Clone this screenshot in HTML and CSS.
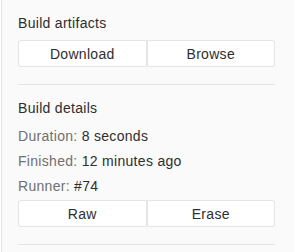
FILE: index.html
```html
<!DOCTYPE html>
<html>
<head>
<meta charset="utf-8">
<link rel="stylesheet" href="styles.css">
</head>
<body>
<aside class="sidebar">
  <section class="block">
    <div class="title">Build artifacts</div>
    <div class="btn-group">
      <a class="btn">Download</a>
      <a class="btn">Browse</a>
    </div>
  </section>
  <section class="block">
    <div class="title">Build details</div>
    <div class="rows">
      <p class="row"><span class="label">Duration:</span> 8 seconds</p>
      <p class="row"><span class="label">Finished:</span> 12 minutes ago</p>
      <p class="row"><span class="label">Runner:</span> #74</p>
    </div>
    <div class="btn-group">
      <a class="btn">Raw</a>
      <a class="btn">Erase</a>
    </div>
  </section>
</aside>
</body>
</html>
```
FILE: styles.css
```css
html, body {
  margin: 0;
  padding: 0;
  background: #ffffff;
}
body {
  font-family: "Liberation Sans", Arial, sans-serif;
  font-size: 14px;
  color: #2e2e2e;
  letter-spacing: 0.3px;
}
.sidebar {
  margin-left: 1px;
  border-left: 1px solid #e5e5e5;
  background: #fafafa;
  height: 252px;
  padding: 0 19px 0 16px;
  box-sizing: border-box;
}
.block {
  padding: 13px 0 17px;
  border-bottom: 1px solid #e5e5e5;
}
.title {
  line-height: 20px;
}
.block > .btn-group {
  margin-top: 7px;
}
.rows {
  margin-top: 6px;
  margin-bottom: 1px;
}
.rows + .btn-group {
  margin-top: 0;
}
.row {
  margin: 0;
  line-height: 25px;
}
.label {
  color: #707070;
}
.btn-group {
  display: flex;
}
.btn {
  flex: 1;
  height: 27px;
  box-sizing: border-box;
  display: flex;
  align-items: center;
  justify-content: center;
  background: #ffffff;
  border: 1px solid #e5e5e5;
  color: #2e2e2e;
  font-size: 14px;
}
.btn:first-child {
  border-radius: 3px 0 0 3px;
}
.btn:last-child {
  border-radius: 0 3px 3px 0;
}
```
